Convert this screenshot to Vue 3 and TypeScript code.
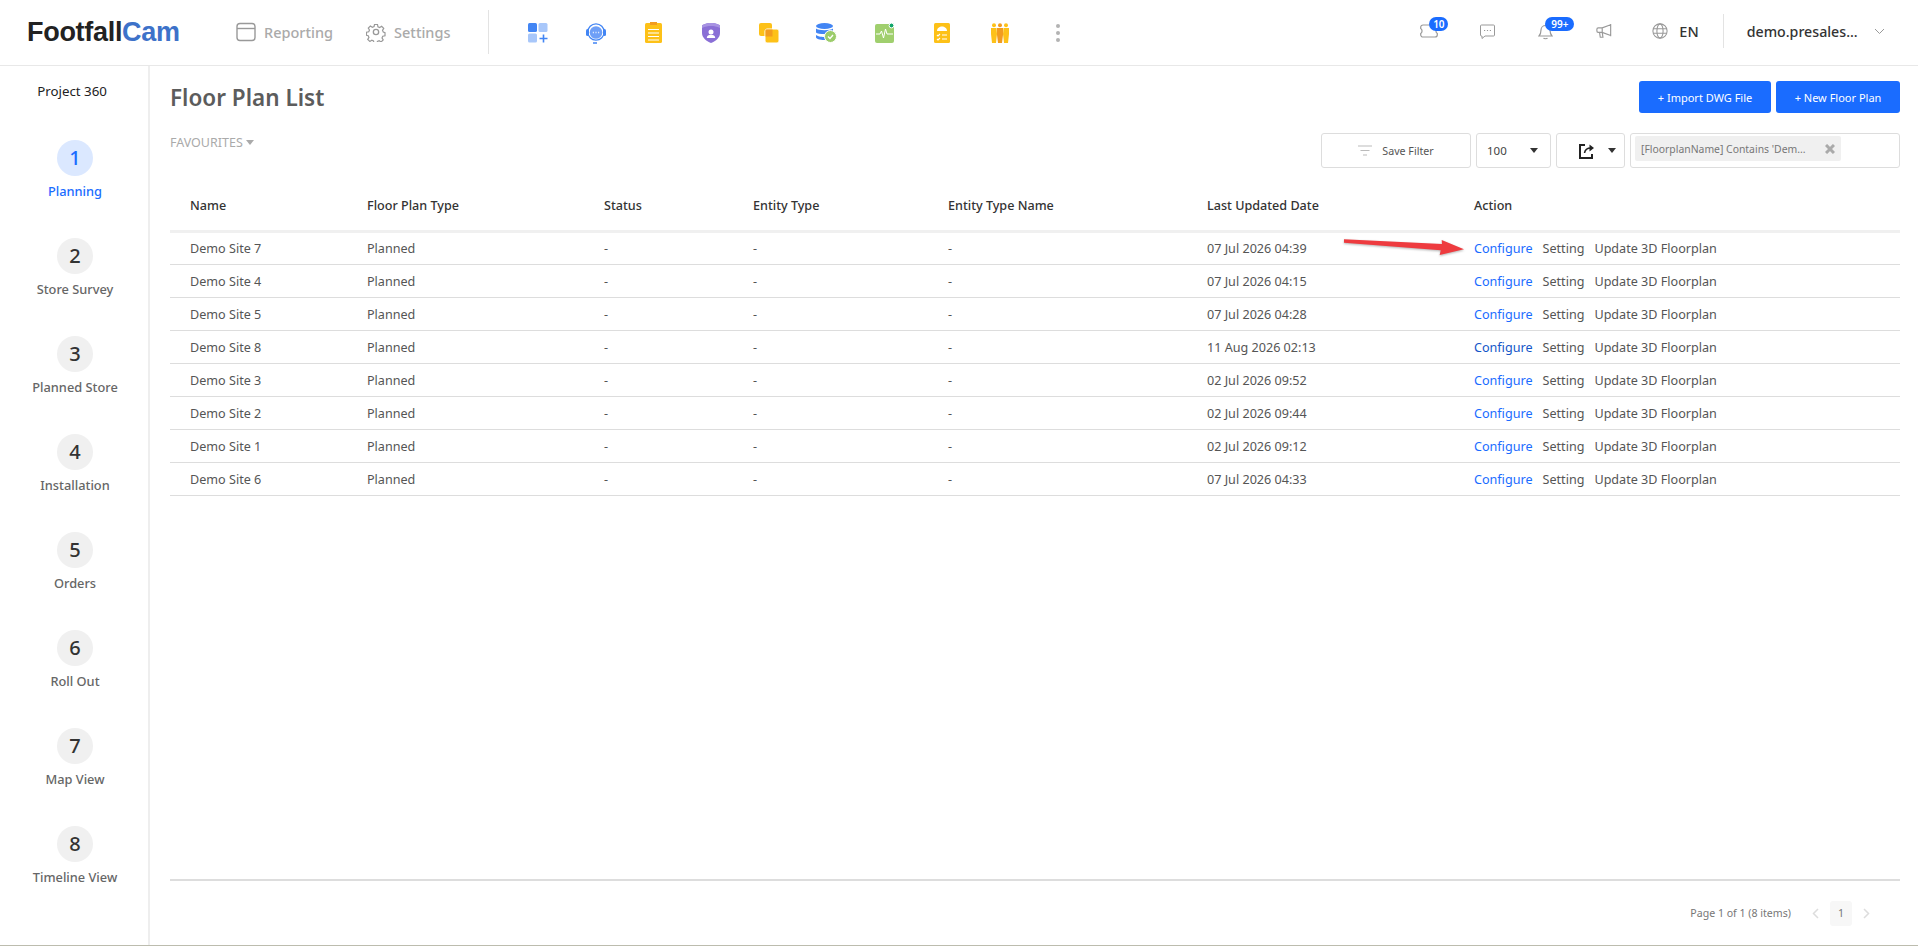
<script setup lang="ts">
const apps = ['grid', 'head', 'clip', 'shield', 'copy', 'db', 'pulse', 'hard', 'people']
const steps = ['Planning', 'Store Survey', 'Planned Store', 'Installation', 'Orders', 'Roll Out', 'Map View', 'Timeline View']
const columns = ['Name', 'Floor Plan Type', 'Status', 'Entity Type', 'Entity Type Name', 'Last Updated Date', 'Action']
const rows = [
  ['Demo Site 7', '07 Jul 2026 04:39'],
  ['Demo Site 4', '07 Jul 2026 04:15'],
  ['Demo Site 5', '07 Jul 2026 04:28'],
  ['Demo Site 8', '11 Aug 2026 02:13'],
  ['Demo Site 3', '02 Jul 2026 09:52'],
  ['Demo Site 2', '02 Jul 2026 09:44'],
  ['Demo Site 1', '02 Jul 2026 09:12'],
  ['Demo Site 6', '07 Jul 2026 04:33'],
]
</script>

<template>
  <div class="page">
    <header class="top">
      <div class="logo">Footfall<span>Cam</span></div>
      <nav class="nav">
        <a class="nav-item">
          <svg width="20" height="20" viewBox="0 0 20 20" fill="none" stroke="#999" stroke-width="1.4"><rect x="1" y="1.5" width="18" height="17" rx="3"/><path d="M1 6.5h18"/></svg>
          Reporting
        </a>
        <a class="nav-item">
          <svg width="20" height="20" viewBox="0 0 24 24" fill="none" stroke="#999" stroke-width="1.6"><circle cx="12" cy="12" r="3.2"/><path d="M10 2h4l.6 3 2.3 1 2.6-1.6 2.800 2.800-1.600 2.600 1 2.300 2.300.900v4l-3 .6-1 2.300 1.600 2.600-2.800 2.800-2.600-1.600-2.300 1-.6 2.300h-4l-.6-3-2.300-1-2.600 1.600-2.800-2.800 1.600-2.600-1-2.300-2.300-.6v-4l3-.6 1-2.300-1.600-2.600 2.800-2.800 2.600 1.600 2.300-1z" transform="translate(1.2 1.2) scale(.9)"/></svg>
          Settings
        </a>
      </nav>
      <div class="apps">
        <div v-for="a in apps" :key="a" class="app">
          <svg v-if="a === 'grid'" width="20" height="20" viewBox="0 0 20 20"><rect width="9" height="9" rx="1.500" fill="#4285f4"/><rect x="10.500" width="9" height="9" rx="1.500" fill="#a8c7fa"/><rect y="10.500" width="9" height="9" rx="1.500" fill="#a8c7fa"/><path d="M15.500 11.500v8M11.500 15.500h8" stroke="#4285f4" stroke-width="1.600"/></svg>
          <svg v-else-if="a === 'head'" width="20" height="22" viewBox="0 0 20 22"><circle cx="10" cy="10" r="8.200" fill="none" stroke="#4285f4" stroke-width="1.300"/><circle cx="10" cy="10.500" r="6.300" fill="#6e9ff7"/><rect x="0" y="7" width="3" height="7" rx="1.500" fill="#4285f4"/><rect x="17" y="7" width="3" height="7" rx="1.500" fill="#4285f4"/><path d="M7 21h4" stroke="#4285f4" stroke-width="1.500"/><path d="M6.800 10.500h1.200M9.400 10.500h1.200M12 10.500h1.200" stroke="#dce8fd" stroke-width="1.300"/></svg>
          <svg v-else-if="a === 'clip'" width="17" height="21" viewBox="0 0 17 21"><rect y="1" width="17" height="20" rx="1.500" fill="#fdc118"/><rect x="5" y="0" width="7" height="3" fill="#f29c1f"/><path d="M3 7.500h11M3 11h11M3 14.500h11M3 18h11" stroke="#fff" stroke-width="1.100"/></svg>
          <svg v-else-if="a === 'shield'" width="18" height="20" viewBox="0 0 18 20"><path d="M9 0c3 0 6 .6 9 2.200V10c0 4.500-4 8-9 10C4 18 0 14.500 0 10V2.200C3 .6 6 0 9 0z" fill="#8a6fd6"/><path d="M9 0c3 0 6 .6 9 2.200V5C15 3.500 12 3 9 3S3 3.500 0 5V2.200C3 .6 6 0 9 0z" fill="#a793e2"/><circle cx="9" cy="9" r="2.500" fill="#fff"/><path d="M4.800 15c0-2.300 1.800-3.300 4.200-3.300s4.200 1 4.200 3.300z" fill="#fff"/></svg>
          <svg v-else-if="a === 'copy'" width="20" height="20" viewBox="0 0 20 20"><rect width="13" height="13" rx="2" fill="#fdc118"/><rect x="6" y="6" width="14" height="14" rx="2" fill="#fdc118" stroke="#fff" stroke-width="1"/><rect x="6.500" y="6.500" width="7" height="7" fill="#f29c1f"/></svg>
          <svg v-else-if="a === 'db'" width="21" height="20" viewBox="0 0 21 20"><ellipse cx="8.500" cy="3" rx="8.500" ry="3" fill="#4285f4"/><path d="M0 5.500c2 2.200 15 2.200 17 0V9.500c-2 2-15 2-17 0z" fill="#4285f4"/><path d="M0 12c2 1.800 7 2 9 2v3c-3 0-8-.5-9-2.500z" fill="#4285f4"/><circle cx="14.500" cy="13.500" r="6" fill="#9ccc6b" stroke="#fff"/><path d="M12 13.500l2 2 3-3.500" stroke="#fff" stroke-width="1.300" fill="none"/></svg>
          <svg v-else-if="a === 'pulse'" width="19" height="20" viewBox="0 0 19 20"><rect y="1" width="19" height="19" rx="2" fill="#a0cf6e"/><path d="M1 11h4l1.500-3 2 7 2-9 1.500 5h6" fill="none" stroke="#fff" stroke-width="1"/><circle cx="16.500" cy="2.500" r="2.400" fill="#12a66b" stroke="#fff"/></svg>
          <svg v-else-if="a === 'hard'" width="16" height="20" viewBox="0 0 16 20"><rect width="16" height="20" rx="1.500" fill="#fdc118"/><path d="M3 8c0-6 10-6 10 0z" fill="#fff"/><path d="M3 12l1 1 2-2M3 16l1 1 2-2M8 12h5M8 16h5" stroke="#fff" stroke-width="1.100" fill="none"/></svg>
          <svg v-else width="18" height="20" viewBox="0 0 18 20"><g fill="#fdc118"><circle cx="3" cy="2.200" r="2"/><circle cx="15" cy="2.200" r="2"/><path d="M0 5h5.500l.5 6-1 9H1L0 11zM12.500 5H18v6l-1 9h-4l-1-9z"/></g><circle cx="9" cy="2.200" r="2" fill="#f29c1f"/><path d="M6 5h6v7l-1 8H7l-1-8z" fill="#f29c1f"/></svg>
        </div>
        <div class="app dots"><i></i><i></i><i></i></div>
      </div>
      <div class="tools">
        <span class="tool">
          <svg width="18" height="14" viewBox="0 0 18 14" fill="none" stroke="#999" stroke-width="1.200"><path d="M3 1h12a2.300 2.300 0 0 1 2.300 2.300v1.200a3 3 0 0 0 0 5v1.200a2.300 2.300 0 0 1-2.300 2.300H3a2.300 2.300 0 0 1-2.300-2.300V9.500a3 3 0 0 0 0-5V3.300A2.300 2.300 0 0 1 3 1z"/></svg>
          <b class="badge">10</b>
        </span>
        <span class="tool">
          <svg width="15" height="15" viewBox="0 0 15 15" fill="none" stroke="#999" stroke-width="1"><path d="M1.500 1h12a1 1 0 0 1 1 1v9a1 1 0 0 1-1 1H5l-3 2.500V12h-.5a1 1 0 0 1-1-1V2a1 1 0 0 1 1-1z"/><path d="M4 6.500h1.200M6.900 6.500h1.200M9.800 6.500h1.200"/></svg>
        </span>
        <span class="tool">
          <svg width="15" height="18" viewBox="0 0 15 18" fill="none" stroke="#999" stroke-width="1.200"><path d="M1 14c1.300-1.500 2-3 2-6a4.500 4.500 0 0 1 9 0c0 3 .7 4.500 2 6z"/><path d="M5.500 16c.7 1 3.300 1 4 0"/></svg>
          <b class="badge wide">99+</b>
        </span>
        <span class="tool">
          <svg width="16" height="16" viewBox="0 0 18 18" fill="none" stroke="#999" stroke-width="1.300"><path d="M16.500 1v14M16.500 2L7 5.500H2.500A1.500 1.500 0 0 0 1 7v2a1.500 1.500 0 0 0 1.500 1.500H7l9.500 3.500M7 5.500v5M4 10.500l.8 5.500h3l-.8-5.500"/></svg>
        </span>
        <span class="tool lang">
          <svg width="16" height="16" viewBox="0 0 18 18" fill="none" stroke="#999" stroke-width="1.200"><circle cx="9" cy="9" r="8"/><ellipse cx="9" cy="9" rx="3.500" ry="8"/><path d="M1.500 6.500h15M1.500 11.500h15"/></svg>
          <em>EN</em>
        </span>
      </div>
      <div class="user">
        <span>demo.presales...</span>
        <svg width="11" height="7" viewBox="0 0 11 7" fill="none" stroke="#999" stroke-width="1"><path d="M1 1l4.500 4.500L10 1"/></svg>
      </div>
    </header>

    <div class="body">
      <aside class="side">
        <div class="project">Project 360</div>
        <ul class="steps">
          <li v-for="(s, i) in steps" :key="s" class="step" :class="{ on: i === 0 }">
            <span class="circle">{{ i + 1 }}</span>
            <span class="label">{{ s }}</span>
          </li>
        </ul>
      </aside>

      <main class="main">
        <div class="title-row">
          <h1>Floor Plan List</h1>
          <div class="actions">
            <button class="primary wide-btn">+ Import DWG File</button>
            <button class="primary">+ New Floor Plan</button>
          </div>
        </div>

        <div class="filter-row">
          <div class="fav">FAVOURITES <i class="caret grey"></i></div>
          <div class="filters">
            <div class="box save">
              <svg width="14" height="11" viewBox="0 0 14 11" stroke="#bbb" stroke-width="1.200"><path d="M0 1h14M2.500 5.500h9M5 10h4"/></svg>
              Save Filter
            </div>
            <div class="box size">100 <i class="caret"></i></div>
            <div class="box exp">
              <svg width="16" height="16" viewBox="0 0 16 16" fill="none" stroke="#222" stroke-width="2"><path d="M6 2H1v13h12v-4"/><path d="M5.500 10c.5-3.500 3-5 6.500-5" stroke-width="1.600"/><path d="M10.500 1.500L15 5l-4.500 3.500z" fill="#222" stroke="none"/></svg>
              <i class="caret"></i>
            </div>
            <div class="box query">
              <span class="chip">
                <span class="chip-text">[FloorplanName] Contains 'Dem...</span>
                <svg width="10" height="10" viewBox="0 0 10 10" stroke="#aaa" stroke-width="3"><path d="M1 1l8 8M9 1L1 9"/></svg>
              </span>
            </div>
          </div>
        </div>

        <table class="grid">
          <colgroup>
            <col class="c1" /><col class="c2" /><col class="c3" /><col class="c4" /><col class="c5" /><col class="c6" /><col />
          </colgroup>
          <thead>
            <tr><th v-for="c in columns" :key="c">{{ c }}</th></tr>
          </thead>
          <tbody>
            <tr v-for="(r, i) in rows" :key="r[0]">
              <td>{{ r[0] }}</td>
              <td>Planned</td>
              <td>-</td>
              <td>-</td>
              <td>-</td>
              <td>{{ r[1] }}</td>
              <td class="acts">
                <a class="cfg" :class="{ hover: i === 3 }">Configure</a>
                <a>Setting</a>
                <a>Update 3D Floorplan</a>
                <svg v-if="i === 0" class="arrow" width="122" height="20" viewBox="0 0 122 20"><path d="M0 2.300L98 7l-.3-4L120 12.300 95.700 18l1-4.700L0 5.700z" fill="#ee3b3f"/></svg>
              </td>
            </tr>
          </tbody>
        </table>

        <div class="pager">
          <span class="info">Page 1 of 1 (8 items)</span>
          <svg width="7" height="11" viewBox="0 0 7 11" fill="none" stroke="#ddd" stroke-width="1.500"><path d="M6 1L1.500 5.500 6 10"/></svg>
          <span class="num">1</span>
          <svg width="7" height="11" viewBox="0 0 7 11" fill="none" stroke="#ddd" stroke-width="1.500"><path d="M1 1l4.500 4.500L1 10"/></svg>
        </div>
      </main>
    </div>
  </div>
</template>

<style scoped>
.page {
  height: 946px;
  display: flex;
  flex-direction: column;
  overflow: hidden;
  border-bottom: 1px solid #bcbcae;
  box-sizing: border-box;
  background: #fff;
  font-family: "Noto Sans", sans-serif;
  font-size: 13px;
  color: #555;
}
.top {
  height: 66px;
  flex: none;
  box-sizing: border-box;
  border-bottom: 1px solid #e8e8e8;
  display: flex;
  align-items: center;
  padding-left: 27px;
}
.logo {
  font-family: "Liberation Sans", sans-serif;
  font-weight: 700;
  font-size: 27px;
  letter-spacing: -0.3px;
  color: #222;
  width: 209px;
  margin-top: -1px;
}
.logo span { color: #3d72c9; }
.nav {
  display: flex;
  gap: 33px;
  padding-right: 38px;
  height: 44px;
  margin-top: -2px;
  align-items: center;
  border-right: 1px solid #e3e3e3;
}
.nav-item {
  display: flex;
  align-items: center;
  gap: 8px;
  font-size: 14.5px;
  font-weight: 500;
  color: #aaa;
}
.apps { display: flex; margin-left: 20px; }
.app {
  width: 57.700px;
  display: flex;
  align-items: center;
  justify-content: center;
}
.dots { flex-direction: column; gap: 3px; }
.dots i { width: 4px; height: 4px; border-radius: 50%; background: #b3b3b3; }
.tools { margin-left: 313px; display: flex; align-items: center; margin-top: -3px; }
.tool {
  position: relative;
  width: 58.500px;
  height: 20px;
  display: flex;
  justify-content: center;
  align-items: center;
}
.badge {
  position: absolute;
  left: 30px;
  top: -4px;
  height: 14px;
  min-width: 19px;
  border-radius: 7px;
  background: #1a6cff;
  color: #fff;
  font-size: 10px;
  font-weight: 600;
  line-height: 14px;
  text-align: center;
}
.badge.wide { width: 29px; left: 29px; }
.lang { gap: 11px; width: auto; margin-left: 19px; }
.lang em { font-style: normal; font-size: 14.5px; font-weight: 500; color: #333; }
.user {
  margin-left: 24px;
  padding-left: 23px;
  border-left: 1px solid #e3e3e3;
  height: 34px;
  margin-top: -3px;
  display: flex;
  align-items: center;
  gap: 16px;
  font-size: 14.2px;
  font-weight: 500;
  color: #333;
}
.body { flex: 1; display: flex; min-height: 0; }
.side {
  width: 150px;
  flex: none;
  box-sizing: border-box;
  padding-left: 2px;
  border-right: 2px solid #eee;
  text-align: center;
}
.project { color: #222; font-size: 13.3px; font-weight: 400; line-height: 18px; padding-top: 16px; padding-right: 6px; }
.steps { list-style: none; margin: 0; padding: 40px 0 0; }
.step {
  height: 98px;
  display: flex;
  flex-direction: column;
  align-items: center;
  font-size: 12.8px;
  font-weight: 500;
  color: #666;
}
.circle {
  width: 36px;
  height: 36px;
  border-radius: 50%;
  background: #f0f0f0;
  color: #333;
  font-size: 20px;
  font-weight: 500;
  line-height: 36px;
  margin-bottom: 6px;
}
.label { line-height: 18px; }
.on .circle { background: #dbe8ff; color: #1a6cff; }
.on .label { color: #1a6cff; }
.main {
  flex: 1;
  min-width: 0;
  padding: 0 18px 0 20px;
  display: flex;
  flex-direction: column;
}
.title-row {
  display: flex;
  justify-content: space-between;
  align-items: flex-start;
  padding-top: 15px;
}
h1 {
  margin: 0;
  font-size: 22.500px;
  font-weight: 600;
  color: #5c5c5c;
  line-height: 34px;
}
.actions { display: flex; gap: 5px; }
.primary {
  width: 124px;
  height: 32px;
  border: 0;
  border-radius: 3px;
  background: #1a6cff;
  color: #fff;
  font: 400 11px "Noto Sans", sans-serif;
}
.wide-btn { width: 132px; }
.filter-row {
  display: flex;
  justify-content: space-between;
  align-items: flex-start;
  margin-top: 3px;
}
.fav { font-size: 12.500px; color: #aaa; margin-top: 16px; display: flex; align-items: center; gap: 3px; height: 17px; }
.caret {
  display: inline-block;
  width: 0;
  height: 0;
  border: 4px solid transparent;
  border-top: 5px solid #333;
  border-bottom: 0;
}
.caret.grey { border-top-color: #aaa; }
.filters { display: flex; gap: 5px; margin-top: 15px; }
.box {
  height: 35px;
  box-sizing: border-box;
  border: 1px solid #ddd;
  border-radius: 3px;
  display: flex;
  align-items: center;
  font-size: 10.700px;
  color: #555;
}
.save { width: 150px; justify-content: center; gap: 10px; }
.size { width: 75px; justify-content: space-between; padding: 0 12px 0 10px; color: #444; font-size: 11.500px; }
.exp { width: 69px; justify-content: flex-end; gap: 13px; padding-right: 8px; }
.query { width: 270px; padding: 2px 4px 0; align-items: flex-start; }
.chip {
  width: 206px;
  height: 25px;
  box-sizing: border-box;
  padding: 0 6px;
  background: #f0f0f0;
  border-radius: 2px;
  display: flex;
  justify-content: space-between;
  align-items: center;
  color: #777;
  font-size: 10.400px;
}
.chip-text { white-space: nowrap; }
.grid {
  width: 100%;
  table-layout: fixed;
  border-collapse: collapse;
  margin-top: 12px;
}
.c1 { width: 177px; }
.c2 { width: 237px; }
.c3 { width: 149px; }
.c4 { width: 195px; }
.c5 { width: 259px; }
.c6 { width: 267px; }
th {
  height: 50px;
  padding: 0 20px;
  text-align: left;
  font-size: 12.600px;
  font-weight: 500;
  color: #333;
  border-bottom: 3px solid #f0f0f0;
}
td {
  height: 33px;
  box-sizing: border-box;
  padding: 0 20px;
  font-size: 12.600px;
  color: #555;
  border-bottom: 1px solid #ddd;
}
.acts { position: relative; white-space: nowrap; }
.acts a { margin-right: 10px; }
.cfg { color: #1a6cff; }
.cfg.hover { color: #1456c8; }
.arrow { position: absolute; left: -110px; top: 4px; filter: drop-shadow(0 1px 1px rgba(0, 0, 0, .3)); }
.pager {
  margin-top: auto;
  height: 66px;
  box-sizing: border-box;
  border-top: 2px solid #ddd;
  display: flex;
  align-items: center;
  justify-content: flex-end;
  padding-right: 30px;
  font-size: 10.600px;
  color: #777;
}
.info { margin-right: 21px; }
.num {
  width: 22px;
  height: 25px;
  margin: 0 11px;
  background: #f7f7f7;
  border-radius: 3px;
  text-align: center;
  line-height: 25px;
}
</style>
